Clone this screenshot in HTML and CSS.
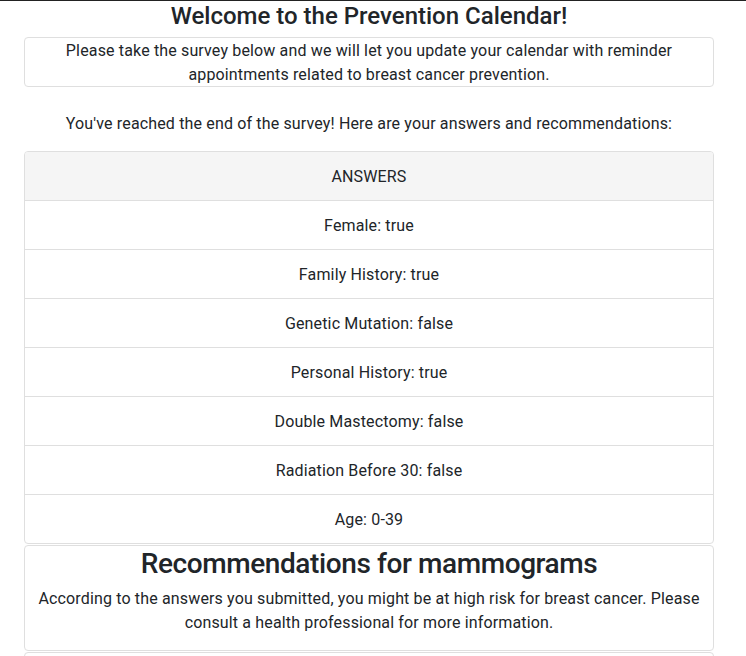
FILE: index.html
```html
<!DOCTYPE html>
<html>
<head>
<meta charset="utf-8">
<link rel="stylesheet" href="styles.css">
</head>
<body>
<div class="page">
  <h3 class="title">Welcome to the Prevention Calendar!</h3>
  <div class="card intro">Please take the survey below and we will let you update your calendar with reminder appointments related to breast cancer prevention.</div>
  <p class="lead">You've reached the end of the survey! Here are your answers and recommendations:</p>
  <div class="card list">
    <div class="list-header">ANSWERS</div>
    <div class="list-item">Female: true</div>
    <div class="list-item">Family History: true</div>
    <div class="list-item">Genetic Mutation: false</div>
    <div class="list-item">Personal History: true</div>
    <div class="list-item">Double Mastectomy: false</div>
    <div class="list-item">Radiation Before 30: false</div>
    <div class="list-item">Age: 0-39</div>
  </div>
  <div class="card rec">
    <h2 class="rec-title">Recommendations for mammograms</h2>
    <p class="rec-text">According to the answers you submitted, you might be at high risk for breast cancer. Please consult a health professional for more information.</p>
  </div>
  <div class="card rec rec-next"></div>
</div>
</body>
</html>
```

FILE: styles.css
```css
html, body {
  margin: 0;
  padding: 0;
  background: #fff;
}
body {
  border-top: 1px solid #222;
  font-family: "Roboto", "Liberation Sans", sans-serif;
  font-size: 16px;
  line-height: 24px;
  letter-spacing: 0.15px;
  color: #212529;
}
.page {
  padding: 0 32px 0 24px;
  text-align: center;
}
.title {
  font-size: 24px;
  font-weight: 500;
  line-height: 29px;
  letter-spacing: 0;
  margin: 1px 0 6px;
}
.card {
  border: 1px solid #dfdfdf;
  border-radius: 4px;
  background: #fff;
}
.intro {
  box-sizing: border-box;
  padding: 1px 8px 0;
  line-height: 24px;
  height: 50px;
}
.lead {
  margin: 25px 0 15px;
}
.list {
  overflow: hidden;
}
.list-header {
  background: #f5f5f5;
  padding: 13px 20px 11px;
  border-bottom: 1px solid #dfdfdf;
}
.list-item {
  padding: 13px 20px 11px;
  border-bottom: 1px solid #dfdfdf;
}
.list-item:last-child {
  border-bottom: none;
}
.rec {
  margin-top: 1px;
  padding: 1px 12px 15px;
}
.rec-title {
  font-size: 28px;
  font-weight: 500;
  line-height: 34px;
  letter-spacing: -0.4px;
  margin: 0 0 6px;
}
.rec-text {
  margin: 0;
}
.rec-next {
  min-height: 80px;
}
```
